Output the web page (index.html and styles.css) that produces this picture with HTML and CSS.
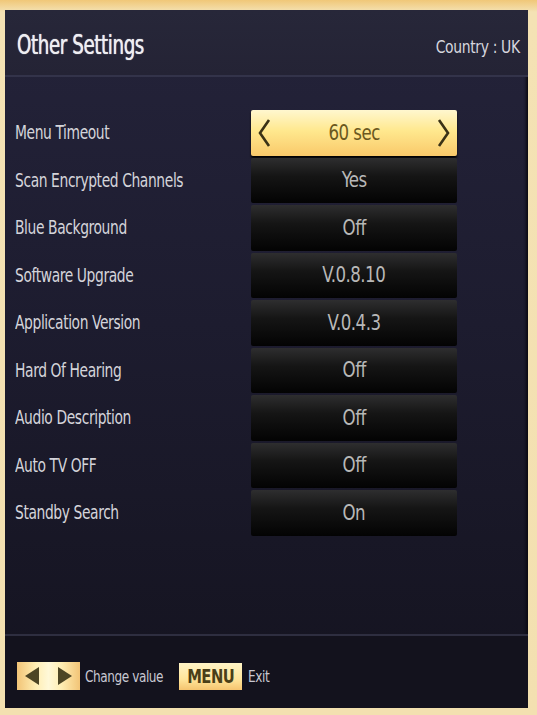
FILE: index.html
```html
<!DOCTYPE html>
<html>
<head>
<meta charset="utf-8">
<link rel="stylesheet" href="styles.css">
</head>
<body>
<div class="frame">
  <div class="panel">
    <header class="head">
      <h1 class="title">Other Settings</h1>
      <span class="country">Country : UK</span>
    </header>
    <ul class="rows">
      <li class="row"><span class="label">Menu Timeout</span><span class="val sel">
        <svg class="chev" width="14" height="30" viewBox="0 0 14 30"><path d="M12 2 L3 15 L12 28" fill="none" stroke="#3a3216" stroke-width="2.6"/></svg>
        <span class="vt">60 sec</span>
        <svg class="chev" width="14" height="30" viewBox="0 0 14 30"><path d="M2 2 L11 15 L2 28" fill="none" stroke="#3a3216" stroke-width="2.6"/></svg>
      </span></li>
      <li class="row"><span class="label">Scan Encrypted Channels</span><span class="val"><span class="vt">Yes</span></span></li>
      <li class="row"><span class="label">Blue Background</span><span class="val"><span class="vt">Off</span></span></li>
      <li class="row"><span class="label">Software Upgrade</span><span class="val"><span class="vt">V.0.8.10</span></span></li>
      <li class="row"><span class="label">Application Version</span><span class="val"><span class="vt">V.0.4.3</span></span></li>
      <li class="row"><span class="label">Hard Of Hearing</span><span class="val"><span class="vt">Off</span></span></li>
      <li class="row"><span class="label">Audio Description</span><span class="val"><span class="vt">Off</span></span></li>
      <li class="row"><span class="label">Auto TV OFF</span><span class="val"><span class="vt">Off</span></span></li>
      <li class="row"><span class="label">Standby Search</span><span class="val"><span class="vt">On</span></span></li>
    </ul>
    <footer class="foot">
      <span class="keys">
        <svg width="63" height="28" viewBox="0 0 63 28">
          <path d="M22 5 L8 14 L22 23 Z" fill="#4d4524"/>
          <path d="M41 5 L55 14 L41 23 Z" fill="#4d4524"/>
        </svg>
      </span>
      <span class="hint wide">Change value</span>
      <span class="menu"><span class="mt">MENU</span></span>
      <span class="hint">Exit</span>
    </footer>
  </div>
</div>
</body>
</html>
```
FILE: styles.css
```css
html, body {
  margin: 0;
  padding: 0;
  height: 100%;
}
body {
  background: #f2dcaa;
  font-family: "Liberation Sans Narrow", "DejaVu Sans Condensed", "Liberation Sans", sans-serif;
}
.frame {
  height: 715px;
  box-sizing: border-box;
  padding: 10px 9px 7px 5px;
  background: linear-gradient(180deg, #f0c778 0px, #f4e2b4 12px, #f3e0b0 100%);
}
.panel {
  height: 100%;
  display: flex;
  flex-direction: column;
  background: linear-gradient(180deg, #24233a 0%, #1d1c2f 45%, #14131f 100%);
  box-shadow: inset -2px 0 3px #0b0a12;
}
.head {
  height: 67px;
  box-sizing: border-box;
  display: flex;
  align-items: center;
  justify-content: space-between;
  padding: 4px 8px 0 12px;
  border-bottom: 2px solid #33334a;
  background: linear-gradient(180deg, #272739 0%, #242335 100%);
}
.title {
  margin: 0;
  font-size: 26px;
  font-weight: normal;
  color: #eeeef2;
  letter-spacing: -0.5px;
  text-shadow: 0 0 1px #fff;
  transform: scaleX(0.78);
  transform-origin: 0 50%;
}
.country {
  font-size: 18px;
  color: #d6d6de;
  letter-spacing: -0.4px;
  padding-top: 4px;
  transform: scaleX(0.86);
  transform-origin: 100% 50%;
}
.rows {
  list-style: none;
  margin: 0;
  padding: 33px 0 0 0;
  display: flex;
  flex-direction: column;
  gap: 2px;
  flex: 1;
}
.row {
  display: flex;
  align-items: center;
  height: 45.5px;
}
.label {
  width: 236px;
  padding-left: 10px;
  font-size: 19.5px;
  color: #d4d4da;
  letter-spacing: -0.5px;
  white-space: nowrap;
  transform: scaleX(0.79);
  transform-origin: 10px 50%;
}
.val {
  width: 206px;
  height: 100%;
  display: flex;
  align-items: center;
  justify-content: center;
  font-size: 21px;
  color: #b8b8b8;
  letter-spacing: -0.6px;
  background: linear-gradient(180deg, #2e2e2f 0%, #151515 40%, #030303 100%);
  border-radius: 2px;
}
.vt {
  display: inline-block;
  transform: scaleX(0.88);
}
.val.sel {
  justify-content: space-between;
  padding: 0 6px;
  box-sizing: border-box;
  color: #6a5820;
  background: linear-gradient(180deg, #fff7cf 0%, #ffe88e 45%, #f9c96a 100%);
  box-shadow: 0 2px 2px #000;
}
.chev { display: block; }
.foot {
  height: 74px;
  box-sizing: border-box;
  border-top: 2px solid #2e2e40;
  display: flex;
  align-items: center;
  padding: 8px 0 0 12px;
  background: #13121d;
}
.keys {
  display: block;
  flex-shrink: 0;
  width: 63px;
  height: 28px;
  background: linear-gradient(90deg, #f2c476 0%, #ffeeb4 30%, #fff8d8 50%, #ffeeb4 70%, #f2c476 100%);
}
.keys svg { display: block; }
.hint {
  font-size: 16px;
  color: #c8c8d2;
  letter-spacing: -0.5px;
  margin-left: 6px;
  white-space: nowrap;
  flex-shrink: 0;
  transform: scaleX(0.84);
  transform-origin: 0 50%;
}
.hint.wide {
  width: 80px;
  margin-left: 5px;
}
.menu {
  display: block;
  flex-shrink: 0;
  margin-left: 14px;
  width: 63px;
  height: 27px;
  line-height: 27px;
  text-align: center;
  font-size: 20px;
  font-weight: bold;
  color: #4a3f18;
  letter-spacing: -0.6px;
  background: linear-gradient(180deg, #fff4c6 0%, #ffe59a 60%, #f5c46f 100%);
}
.mt {
  display: inline-block;
  transform: scaleX(0.82);
}
```
